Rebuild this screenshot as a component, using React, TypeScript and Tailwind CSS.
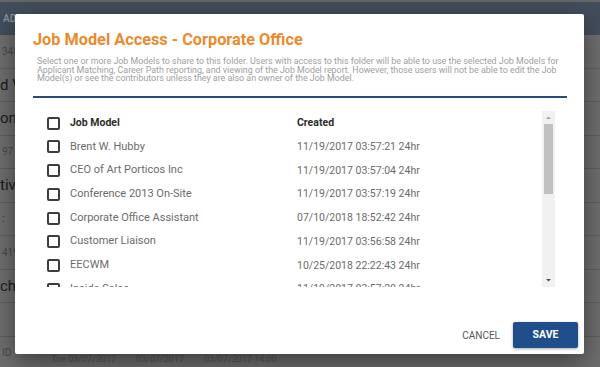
import React from 'react';

const jobModels = [
    { name: 'Brent W. Hubby', created: '11/19/2017 03:57:21 24hr' },
    { name: 'CEO of Art Porticos Inc', created: '11/19/2017 03:57:04 24hr' },
    { name: 'Conference 2013 On-Site', created: '11/19/2017 03:57:19 24hr' },
    { name: 'Corporate Office Assistant', created: '07/10/2018 18:52:42 24hr' },
    { name: 'Customer Liaison', created: '11/19/2017 03:56:58 24hr' },
    { name: 'EECWM', created: '10/25/2018 22:22:43 24hr' },
    { name: 'Inside Sales', created: '11/19/2017 03:57:20 24hr' },
    { name: 'Marketing Lead', created: '11/19/2017 03:57:11 24hr' },
];

// background page rows peeking out from behind the overlay
const bgRows = [
    { left: '345', kind: 'small' },
    { left: 'd V', kind: 'big' },
    { left: 'on', kind: 'big' },
    { left: '97', kind: 'small' },
    { left: 'tive', kind: 'big' },
    { left: ':', kind: 'blue' },
    { left: '419', kind: 'small' },
    { left: 'cho', kind: 'big' },
    { left: '', kind: 'small' },
    { left: 'ID', kind: 'small' },
];

const Checkbox: React.FC = () => (
    <span className="block w-[13px] h-[13px] border-2 border-[#3d3d3d] rounded-[2px] shrink-0" />
);

const Scrollbar: React.FC = () => (
    <div className="w-[13px] h-full bg-[#f1f1f1] flex flex-col items-center shrink-0">
        <svg width="7" height="10" viewBox="0 0 7 10" className="mt-[2px]">
            <path d="M1 6 L3.5 3.5 L6 6 Z" fill="#a3a3a3" />
        </svg>
        <div className="w-[9px] h-[70px] bg-[#c1c1c1] mt-[1px]" />
        <div className="flex-1" />
        <svg width="7" height="10" viewBox="0 0 7 10" className="mb-[2px]">
            <path d="M1 4 L6 4 L3.5 6.5 Z" fill="#505050" />
        </svg>
    </div>
);

export default function App() {
    return (
        <div className="relative w-[600px] h-[367px] overflow-hidden bg-[#6e6e6e]" style={{ fontFamily: 'Roboto, "Liberation Sans", sans-serif' }}>
            {/* page behind the dialog */}
            <div className="h-[2px] bg-[#666666]" />
            <div className="h-[33px] bg-[#434e5c] flex items-center px-[3px]">
                <span className="text-[10px] font-medium text-[#8a95a3]">ADDRESS</span>
            </div>
            {bgRows.map((r, i) => (
                <div key={i} className="h-[33.5px] border-b border-[#5f5f5f] flex items-center">
                    <span className={
                        r.kind === 'big' ? 'text-[15px] text-[#1c1c1c]'
                            : r.kind === 'blue' ? 'text-[11px] text-[#2c3d63] ml-[2px]'
                                : 'text-[10px] text-[#4a4a4a] ml-[2px]'
                    }>
                        {r.left}
                    </span>
                    {i === 9 && (
                        <span className="ml-[40px] mt-[14px] flex gap-[20px] text-[9px] text-[#555555]">
                            <span>Tue 03/07/2017</span>
                            <span>03/07/2017</span>
                            <span>03/07/2017 14:00</span>
                        </span>
                    )}
                </div>
            ))}

            {/* dialog */}
            <div className="absolute left-[15px] top-[14px] w-[569px] h-[340px] bg-white rounded-[2px] shadow-[0_8px_24px_rgba(0,0,0,0.45)] flex flex-col">
                <div className="pl-[18px] pr-[17px] pt-[15px]">
                    <h2 className="text-[16.3px] leading-[22px] font-bold text-[#ec8a2e]">Job Model Access - Corporate Office</h2>
                    <p className="mt-[6px] pl-[4px] text-[8.9px] leading-[8.7px] text-[#a0a0a0]">
                        Select one or more Job Models to share to this folder. Users with access to this folder will be able to use the selected Job Models for Applicant Matching, Career Path reporting, and viewing of the Job Model report. However, those users will not be able to edit the Job Model(s) or see the contributors unless they are also an owner of the Job Model.
                    </p>
                    <div className="mt-[13px] h-[2px] bg-[#2b4a7a]" />
                </div>

                <div className="mt-[13px] ml-[22px] mr-[29px] h-[176px] flex">
                    <div className="flex-1 overflow-hidden pl-[10px]">
                        <div className="h-[24px] flex items-center text-[10.5px] font-bold text-[#2b2b2b]">
                            <Checkbox />
                            <span className="ml-[10px] w-[227px]">Job Model</span>
                            <span>Created</span>
                        </div>
                        {jobModels.map(m => (
                            <div key={m.name} className="h-[23.7px] flex items-center text-[#6b6b6b]">
                                <Checkbox />
                                <span className="ml-[10px] w-[227px] text-[11px]">{m.name}</span>
                                <span className="text-[10.5px]">{m.created}</span>
                            </div>
                        ))}
                    </div>
                    <Scrollbar />
                </div>

                <div className="flex-1" />
                <div className="flex items-center justify-end gap-[13px] pr-[6px] pb-[6px]">
                    <button className="text-[10px] text-[#555555]">CANCEL</button>
                    <button className="w-[65px] h-[26px] bg-[#1f4e8a] text-white text-[10.5px] font-bold rounded-[2px] shadow-[0_1px_3px_rgba(0,0,0,0.35)]">SAVE</button>
                </div>
            </div>
        </div>
    );
}
